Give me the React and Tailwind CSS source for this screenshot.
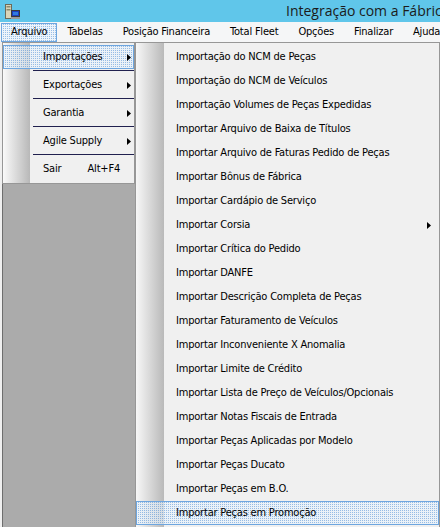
import React from 'react';

const subItems = [
  'Importação do NCM de Peças',
  'Importação do NCM de Veículos',
  'Importação Volumes de Peças Expedidas',
  'Importar Arquivo de Baixa de Títulos',
  'Importar Arquivo de Faturas Pedido de Peças',
  'Importar Bônus de Fábrica',
  'Importar Cardápio de Serviço',
  'Importar Corsia',
  'Importar Crítica do Pedido',
  'Importar DANFE',
  'Importar Descrição Completa de Peças',
  'Importar Faturamento de Veículos',
  'Importar Inconveniente X Anomalia',
  'Importar Limite de Crédito',
  'Importar Lista de Preço de Veículos/Opcionais',
  'Importar Notas Fiscais de Entrada',
  'Importar Peças Aplicadas por Modelo',
  'Importar Peças Ducato',
  'Importar Peças em B.O.',
  'Importar Peças em Promoção',
];

const menuBar = ['Arquivo', 'Tabelas', 'Posição Financeira', 'Total Fleet', 'Opções', 'Finalizar', 'Ajuda'];

const arquivoItems = [
  { label: 'Importações', arrow: true, active: true },
  { label: 'Exportações', arrow: true },
  { label: 'Garantia', arrow: true },
  { label: 'Agile Supply', arrow: true },
  { label: 'Sair', shortcut: 'Alt+F4' },
];

// dotted "selected" look of the old ToolStrip renderer
const hl =
  'bg-[image:conic-gradient(rgba(120,170,225,0.75)_0%_25%,rgba(232,243,253,0.6)_0%_100%)] bg-[length:2px_2px] border border-[#6ea6df]';

function Arrow() {
  return (
    <svg width="4" height="7" viewBox="0 0 4 7" className="shrink-0">
      <polygon points="0,0 4,3.5 0,7" fill="#000" />
    </svg>
  );
}

function AppIcon() {
  return (
    <svg width="16" height="16" viewBox="0 0 16 16">
      <rect x="1.5" y="0.5" width="6" height="14" fill="#d8d4b8" stroke="#6b6b5a" />
      <rect x="2.5" y="2" width="4" height="1.5" fill="#8a8a70" />
      <rect x="2.5" y="5" width="4" height="1.5" fill="#8a8a70" />
      <rect x="7.5" y="6.5" width="8" height="6" fill="#1c3fbf" stroke="#3a3a3a" />
      <rect x="9" y="8" width="5" height="3" fill="#2f7be0" />
      <rect x="7" y="13" width="9" height="2" fill="#9a9a9a" />
    </svg>
  );
}

export default function App() {
  return (
    <div className="w-[440px] h-[527px] overflow-hidden relative flex flex-col bg-[#f0f0f0] font-['DejaVu_Sans_Condensed','DejaVu_Sans',sans-serif] text-[11px] tracking-[-0.2px] text-black">
      {/* title bar */}
      <div className="h-[22px] shrink-0 bg-[#60c6ea] flex items-center overflow-hidden">
        <div className="pl-[4px] pt-[1px] shrink-0">
          <AppIcon />
        </div>
        <div className="pl-[266px] whitespace-nowrap font-['Open_Sans','Noto_Sans',sans-serif] text-[14px] tracking-normal text-[#1b1b1b] leading-none">
          Integração com a Fábrica
        </div>
      </div>

      {/* menu bar */}
      <div className="h-[20px] shrink-0 bg-[#f5f6f7] flex items-end pl-[1px]">
        {menuBar.map((m, i) => (
          <div
            key={m}
            className={
              i === 0
                ? `h-[19px] px-[9px] flex items-center whitespace-nowrap ${hl}`
                : 'h-[19px] px-[9px] flex items-center whitespace-nowrap border border-transparent'
            }
          >
            {m}
          </div>
        ))}
      </div>

      {/* MDI client */}
      <div className="flex-1 flex pl-[2px]">
        <div className="flex-1 bg-[#ababab] border-l border-t border-[#6e6e6e]" />
      </div>

      {/* Arquivo dropdown */}
      <div className="absolute left-[2px] top-[42px] w-[133px] border border-[#979797] bg-[#f0f0f0] bg-[image:linear-gradient(to_right,#fafafa_0px,#b8b8b8_27px,#f0f0f0_27px)] py-[2px]">
        {arquivoItems.map((it, i) => (
          <div key={it.label}>
            {i > 0 && (
              <div className="h-[4px] pt-[1px]">
                <div className="h-px ml-[30px] bg-[#20204e]" />
              </div>
            )}
            <div
              className={
                it.active
                  ? `h-[24px] flex items-center pl-[39px] pr-[2px] ${hl}`
                  : 'h-[24px] flex items-center pl-[40px] pr-[3px]'
              }
            >
              <span className="whitespace-nowrap">{it.label}</span>
              {it.shortcut && <span className="ml-auto pr-[11px]">{it.shortcut}</span>}
              {it.arrow && (
                <span className="ml-auto">
                  <Arrow />
                </span>
              )}
            </div>
          </div>
        ))}
      </div>

      {/* Importações submenu */}
      <div className="absolute left-[135px] top-[42px] w-[305px] h-[490px] border border-[#979797] bg-[#f0f0f0] bg-[image:linear-gradient(to_right,#f7f7f7_0px,#b9b9b9_28px,#f0f0f0_28px)] pt-[2px]">
        {subItems.map((s, i) => (
          <div
            key={s}
            className={
              i === subItems.length - 1
                ? `h-[24px] flex items-center pl-[39px] pr-[7px] ${hl}`
                : 'h-[24px] flex items-center pl-[40px] pr-[8px]'
            }
          >
            <span className="whitespace-nowrap">{s}</span>
            {s === 'Importar Corsia' && (
              <span className="ml-auto">
                <Arrow />
              </span>
            )}
          </div>
        ))}
      </div>
    </div>
  );
}
